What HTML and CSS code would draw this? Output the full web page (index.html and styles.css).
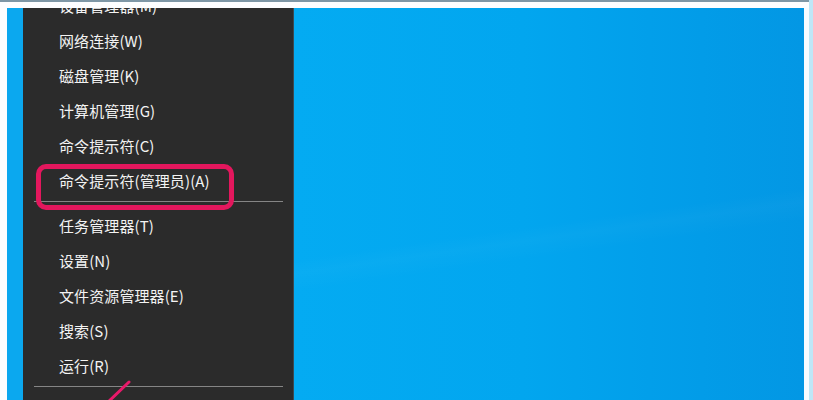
FILE: index.html
```html
<!DOCTYPE html>
<html lang="zh-CN">
<head>
<meta charset="utf-8">
<title>Win+X 菜单</title>
<link rel="stylesheet" href="styles.css">
</head>
<body>
<div class="screen">
  <div class="edge-white"></div>
  <div class="edge-blue"></div>
  <nav class="menu">
    <ul class="menu-list">
      <li class="item">设备管理器(M)</li>
      <li class="item">网络连接(W)</li>
      <li class="item">磁盘管理(K)</li>
      <li class="item">计算机管理(G)</li>
      <li class="item">命令提示符(C)</li>
      <li class="item item-marked">命令提示符(管理员)(A)</li>
      <li class="sep"></li>
      <li class="item">任务管理器(T)</li>
      <li class="item">设置(N)</li>
      <li class="item">文件资源管理器(E)</li>
      <li class="item">搜索(S)</li>
      <li class="item">运行(R)</li>
      <li class="sep"></li>
    </ul>
  </nav>
  <div class="desktop"></div>
  <div class="right-white"></div>
  <div class="right-blue"></div>

  <div class="frame-top"></div>
  <svg class="arrow" width="40" height="30" viewBox="0 0 40 30">
    <line x1="31" y1="2" x2="8" y2="24" stroke="#e8196a" stroke-width="3" stroke-linecap="round"/>
  </svg>
</div>
</body>
</html>
```

FILE: styles.css
```css
* { box-sizing: border-box; }
html, body { margin: 0; padding: 0; }
body {
  width: 813px;
  height: 400px;
  overflow: hidden;
  background: #0aa6ee;
  font-family: "Noto Sans CJK SC", "Microsoft YaHei", "Noto Sans", sans-serif;
}
.screen {
  position: relative;
  display: flex;
  width: 813px;
  height: 400px;
  overflow: hidden;
}
.edge-white { width: 7px; background: #fdfeff; flex: none; }
.edge-blue { width: 16px; background: #0ba8ef; flex: none; }
.menu {
  width: 271px;
  flex: none;
  background: #2b2b2b;
  border-right: 1px solid #3c4a52;
  overflow: hidden;
}
.menu-list {
  list-style: none;
  margin: -12px 0 0 0;
  padding: 0;
}
.item {
  position: relative;
  height: 35px;
  display: flex;
  align-items: center;
  padding-left: 36px;
  color: #f3f3f3;
  font-size: 15px;
  letter-spacing: 0.1px;
  white-space: nowrap;
}
.item-marked::after {
  content: "";
  position: absolute;
  left: 13px;
  top: 1px;
  width: 188px;
  height: 36px;
  border: 5px solid #e3175d;
  border-radius: 10px;
}
.sep {
  height: 1px;
  margin: 3px 10px 6px 11px;
  background: #858585;
}
.desktop {
  flex: 1;
  background:
    linear-gradient(172deg, rgba(255,255,255,0) 55%, rgba(255,255,255,0.025) 58%, rgba(255,255,255,0) 62%),
    linear-gradient(90deg, #04abf2 0%, #02a6ef 45%, #029ce8 80%, #0397e4 100%);
}
.right-white { width: 5px; flex: none; background: #f8fcff; }
.right-blue { width: 4px; flex: none; background: #bfe6f7; }
.frame-top {
  position: absolute;
  left: 0;
  top: 0;
  width: 809px;
  height: 8px;
  background: #fdfeff;
  border-top: 2px solid #7e97a6;
}
.arrow {
  position: absolute;
  left: 98px;
  top: 380px;
}
```
